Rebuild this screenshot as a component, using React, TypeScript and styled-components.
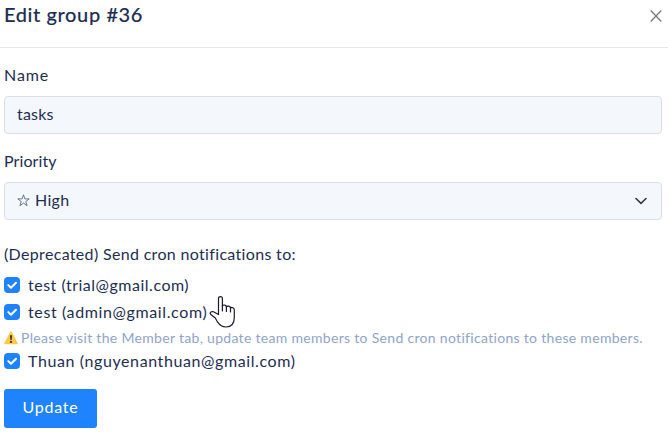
import React from "react";
import styled, { createGlobalStyle } from "styled-components";

const GlobalStyle = createGlobalStyle`
  * { box-sizing: border-box; }
  body {
    margin: 0;
    background: #fff;
    color: #1e2e50;
    font-family: Lato, "DejaVu Sans", sans-serif;
    font-size: 16px;
    overflow: hidden;
  }
`;

const Dialog = styled.main`
  position: relative;
  width: 668px;
  height: 435px;
  background: #fff;
`;

const Header = styled.header`
  display: flex;
  justify-content: space-between;
  height: 48px;
  padding: 0 6px 0 4px;
  border-bottom: 1px solid #e6e7e9;
`;

const Title = styled.h1`
  margin: 0;
  font-size: 20px;
  font-weight: 500;
  line-height: 29px;
  -webkit-text-stroke: 0.1px currentColor;
`;

const CloseButton = styled.button`
  display: flex;
  align-items: flex-start;
  padding: 10px 0 0;
  border: 0;
  background: none;
  color: #77797d;
`;

const Form = styled.form`
  padding: 15px 6px 0 4px;
`;

const Tracked = styled.span<{ $track?: number }>`
  letter-spacing: ${(p) => p.$track ?? 0}px;
  white-space: pre;
`;

const Label = styled.label`
  display: block;
  height: 24px;
  margin-bottom: 9px;
  line-height: 24px;
`;

const Control = styled.div`
  display: flex;
  align-items: center;
  justify-content: space-between;
  height: 38px;
  margin-bottom: 15px;
  padding: 0 14px 3px 12px;
  border: 1px solid #dadfe5;
  border-radius: 4px;
  background: #f4f8fc;
`;

const Value = styled.span`
  display: flex;
  align-items: center;
  gap: 5px;
`;

const Chevron = styled.svg`
  margin-top: 3px;
`;

const Legend = styled.div`
  height: 24px;
  margin: 22px 0 6px;
  line-height: 24px;
`;

const CheckRow = styled.label<{ $height: number }>`
  display: flex;
  align-items: center;
  gap: 8px;
  height: ${(p) => p.$height}px;
  padding-bottom: 1px;
`;

const Box = styled.span`
  display: flex;
  align-items: center;
  justify-content: center;
  width: 16px;
  height: 16px;
  margin-top: 1px;
  border-radius: 4px;
  background: #2083fe;
`;

const Warning = styled.div`
  display: flex;
  align-items: center;
  gap: 3px;
  height: 23px;
  padding-top: 2px;
  color: #90a5c8;
  font-size: 14px;
`;

const Submit = styled.button`
  display: block;
  width: 93px;
  height: 39px;
  margin-top: 16px;
  padding: 0 0 4px;
  border: 0;
  border-radius: 3px;
  background: #2083fe;
  color: #fff;
  font: inherit;
`;

const Pointer = styled.svg`
  position: absolute;
  left: 209px;
  top: 295px;
`;

const StarMark = styled.svg`
  margin-top: 2px;
`;

const Check = () => (
  <Box>
    <svg width="16" height="16" viewBox="0 0 16 16" fill="none" stroke="#fff" strokeWidth="2" strokeLinecap="round" strokeLinejoin="round">
      <path d="M4.3 8.1 7 10.7 12 5.7" />
    </svg>
  </Box>
);

const Star = () => (
  <StarMark width="13" height="13" viewBox="0 0 13 13" fill="none" stroke="#4a5876" strokeWidth=".8">
    <path d="M6.5.8 7.9 4.9H12.2L8.8 7.5 10.1 11.7 6.5 9.1 2.9 11.7 4.2 7.5.8 4.9H5.1Z" />
  </StarMark>
);

const WarningIcon = () => (
  <svg width="14" height="14" viewBox="0 0 14 14">
    <path d="M7 .9 13.2 12.6H.8Z" fill="#ffc84a" stroke="#ffc84a" strokeWidth="1.2" strokeLinejoin="round" />
    <path d="M5.9 4.2H8.1L7.6 9H6.4Z" fill="#3c3028" />
    <circle cx="7" cy="10.9" r="1.1" fill="#3c3028" />
  </svg>
);

export default function App() {
  return (
    <>
      <GlobalStyle />
      <Dialog>
        <Header>
          <Title><Tracked $track={0.6}>Edit group #36</Tracked></Title>
          <CloseButton type="button" aria-label="Close">
            <svg width="12" height="12" viewBox="0 0 12 12" stroke="currentColor" strokeWidth="1.3">
              <path d="M.7.5 11.3 11.5M11.3.5.7 11.5" />
            </svg>
          </CloseButton>
        </Header>
        <Form>
          <Label><Tracked $track={0.9}>Name</Tracked></Label>
          <Control><Tracked $track={0.2}>tasks</Tracked></Control>
          <Label><Tracked $track={0.1}>Priority</Tracked></Label>
          <Control>
            <Value><Star /><Tracked $track={0.3}>High</Tracked></Value>
            <Chevron width="12" height="8" viewBox="0 0 12 8" fill="none" stroke="#343a40" strokeWidth="1.6" strokeLinecap="round" strokeLinejoin="round">
              <path d="M1 1.5 6 6.3 11 1.5" />
            </Chevron>
          </Control>
          <Legend><Tracked $track={0.33}>(Deprecated) Send cron notifications to:</Tracked></Legend>
          <CheckRow $height={26}><Check /><Tracked $track={0.51}>test (trial@gmail.com)</Tracked></CheckRow>
          <CheckRow $height={27}><Check /><Tracked $track={0.62}>test (admin@gmail.com)</Tracked></CheckRow>
          <Warning><WarningIcon /><Tracked $track={0.31}>Please visit the Member tab, update team members to Send cron notifications to these members.</Tracked></Warning>
          <CheckRow $height={25}><Check /><Tracked $track={0.6}>Thuan (nguyenanthuan@gmail.com)</Tracked></CheckRow>
          <Submit type="button"><Tracked $track={0.75}>Update</Tracked></Submit>
        </Form>
        <Pointer width="28" height="34" viewBox="0 0 28 34" fill="#fff" stroke="#1b1b2b" strokeWidth="1.2" strokeLinejoin="round" strokeLinecap="round">
          <path d="M9.5 19.5V3.5C9.5.9 13.4.9 13.4 3.5V11C14.2 9.4 17.4 9.8 17.4 12 18.3 10.5 21.5 11 21.5 13 22.8 11.9 25.3 12.6 25.3 15V22C25.3 28.5 22 32 17 32 12.8 32 10.5 30 8.6 27.2L6.3 23 1.8 19.5C.3 17.7 2.3 15.9 4.5 16.8Z" />
          <path d="M13.4 10.5V16M17.4 12V16.5M21.5 13V17" fill="none" />
        </Pointer>
      </Dialog>
    </>
  );
}
